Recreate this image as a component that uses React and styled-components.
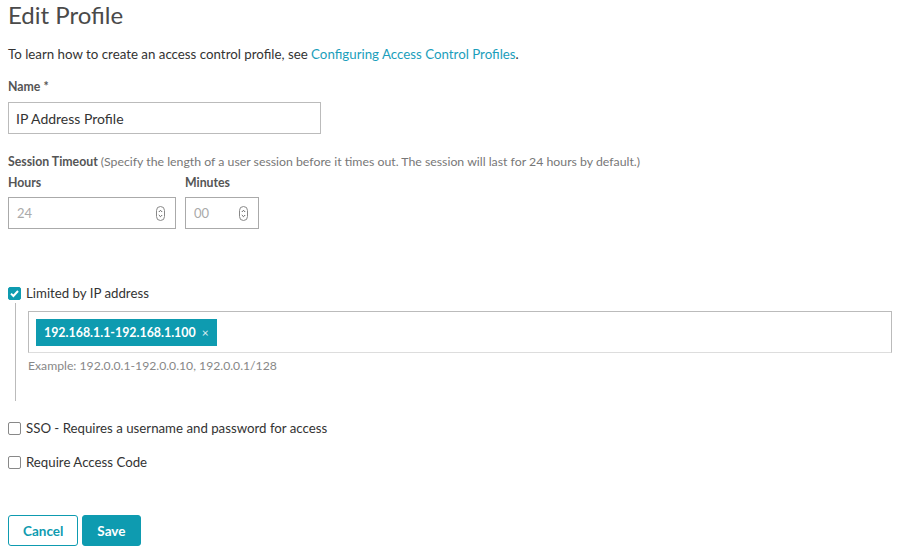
// IMPORTS
import React from 'react';
import styled, { createGlobalStyle } from 'styled-components';

const TEAL = '#0e9bb0';

// COMPONENTS
const SpinIcon = () => (
    <svg width="9" height="15" viewBox="0 0 9 15">
        <rect x="0.5" y="0.5" width="8" height="14" rx="4" fill="none" stroke="#888" />
        <path d="M2.8 6 L4.5 4.3 L6.2 6" fill="none" stroke="#666" strokeWidth="1" />
        <path d="M2.8 9 L4.5 10.7 L6.2 9" fill="none" stroke="#666" strokeWidth="1" />
    </svg>
);

const Check = ({ checked, label }) => (
    <CheckRow>
        <Box checked={checked}>
            {checked && (
                <svg width="11" height="11" viewBox="0 0 11 11">
                    <path d="M2 5.6 L4.4 8 L9 3" fill="none" stroke="#fff" strokeWidth="2" />
                </svg>
            )}
        </Box>
        <span>{label}</span>
    </CheckRow>
);

const App = () => {
    return (
        <React.Fragment>
            <GlobalStyle />
            <Page>
                <Title>Edit Profile</Title>
                <Intro>
                    To learn how to create an access control profile, see{' '}
                    <Link>Configuring Access Control Profiles</Link>.
                </Intro>

                <Label top={15}>Name *</Label>
                <TextInput>IP Address Profile</TextInput>

                <Label top={19}>
                    Session Timeout <Hint>(Specify the length of a user session before it times out. The session will last for 24 hours by default.)</Hint>
                </Label>
                <TimeRow>
                    <TimeField>
                        <Label>Hours</Label>
                        <NumberInput width={168}>
                            <span>24</span>
                            <SpinIcon />
                        </NumberInput>
                    </TimeField>
                    <TimeField>
                        <Label>Minutes</Label>
                        <NumberInput width={74}>
                            <span>00</span>
                            <SpinIcon />
                        </NumberInput>
                    </TimeField>
                </TimeRow>

                <IPSection>
                    <Check checked label="Limited by IP address" />
                    <Nested>
                        <TagBox>
                            <Tag>
                                192.168.1.1-192.168.1.100
                                <TagClose>×</TagClose>
                            </Tag>
                        </TagBox>
                        <Example>Example: 192.0.0.1-192.0.0.10, 192.0.0.1/128</Example>
                    </Nested>
                </IPSection>

                <Options>
                    <Check label="SSO - Requires a username and password for access" />
                    <Check label="Require Access Code" />
                </Options>

                <Actions>
                    <Button>Cancel</Button>
                    <Button primary>Save</Button>
                </Actions>
            </Page>
        </React.Fragment>
    );
};

// STYLED COMPONENTS
const GlobalStyle = createGlobalStyle`
    body {
        margin: 0;
        background: #fff;
        font-family: Lato, "Open Sans", sans-serif;
        color: #333;
    }
`

const Page = styled.div`
    padding: 0 8px;
    display: flex;
    flex-direction: column;
    align-items: flex-start;
`

const Title = styled.h1`
    margin: 0;
    font-size: 24px;
    line-height: 30px;
    font-weight: 400;
    color: #4a4a4a;
`

const Intro = styled.p`
    margin: 15px 0 0;
    font-size: 13.3px;
    line-height: 18px;
    color: #333;
`

const Link = styled.a`
    color: #1b9ebb;
    cursor: pointer;
`

const Label = styled.div`
    margin-top: ${p => p.top || 0}px;
    font-size: 12.3px;
    line-height: 18px;
    font-weight: 700;
    color: #555;
`

const Hint = styled.span`
    font-weight: 400;
    color: #777;
`

const TextInput = styled.div`
    box-sizing: border-box;
    margin-top: 6px;
    width: 313px;
    height: 32px;
    padding: 0 7px;
    border: 1px solid #bbb;
    display: flex;
    align-items: center;
    font-size: 14px;
    color: #333;
`

const TimeRow = styled.div`
    display: flex;
    gap: 9px;
    margin-top: 3px;
`

const TimeField = styled.div`
    display: flex;
    flex-direction: column;
    gap: 5px;
`

const NumberInput = styled.div`
    box-sizing: border-box;
    width: ${p => p.width}px;
    height: 32px;
    padding: 0 10px 0 8px;
    border: 1px solid #aaa;
    display: flex;
    align-items: center;
    justify-content: space-between;
    font-size: 13px;
    color: #aaa;
`

const IPSection = styled.div`
    margin-top: 55px;
    align-self: stretch;
`

const CheckRow = styled.label`
    display: flex;
    align-items: center;
    gap: 5px;
    font-size: 13.25px;
    line-height: 18px;
    color: #333;
`

const Box = styled.span`
    box-sizing: border-box;
    width: 13px;
    height: 13px;
    border-radius: 2px;
    border: 1px solid ${p => (p.checked ? TEAL : '#888')};
    background: ${p => (p.checked ? TEAL : '#fff')};
    display: flex;
    align-items: center;
    justify-content: center;
`

const Nested = styled.div`
    margin: 1px 0 0 7px;
    padding: 8px 0 26px 12px;
    border-left: 1px solid #bbb;
`

const TagBox = styled.div`
    box-sizing: border-box;
    height: 42px;
    padding: 0 7px;
    border: 1px solid #bbb;
    border-bottom-color: #ddd;
    display: flex;
    align-items: center;
`

const Tag = styled.span`
    height: 27px;
    padding: 0 8px;
    background: ${TEAL};
    color: #fff;
    font-size: 12.4px;
    font-weight: 700;
    display: flex;
    align-items: center;
    gap: 6px;
`

const TagClose = styled.span`
    font-weight: 400;
    font-size: 12px;
    opacity: 0.85;
`

const Example = styled.div`
    margin-top: 4px;
    font-size: 12.2px;
    line-height: 18px;
    color: #888;
`

const Options = styled.div`
    margin-top: 18px;
    display: flex;
    flex-direction: column;
    gap: 16px;
`

const Actions = styled.div`
    margin-top: 44px;
    display: flex;
    gap: 4px;
`

const Button = styled.button`
    box-sizing: border-box;
    height: 31px;
    padding: 0 14px;
    border-radius: 3px;
    border: 1px solid ${TEAL};
    background: ${p => (p.primary ? TEAL : '#fff')};
    color: ${p => (p.primary ? '#fff' : TEAL)};
    font-family: Lato, sans-serif;
    font-size: 13.5px;
    font-weight: 700;
    cursor: pointer;
`

// EXPORT
export default App;
